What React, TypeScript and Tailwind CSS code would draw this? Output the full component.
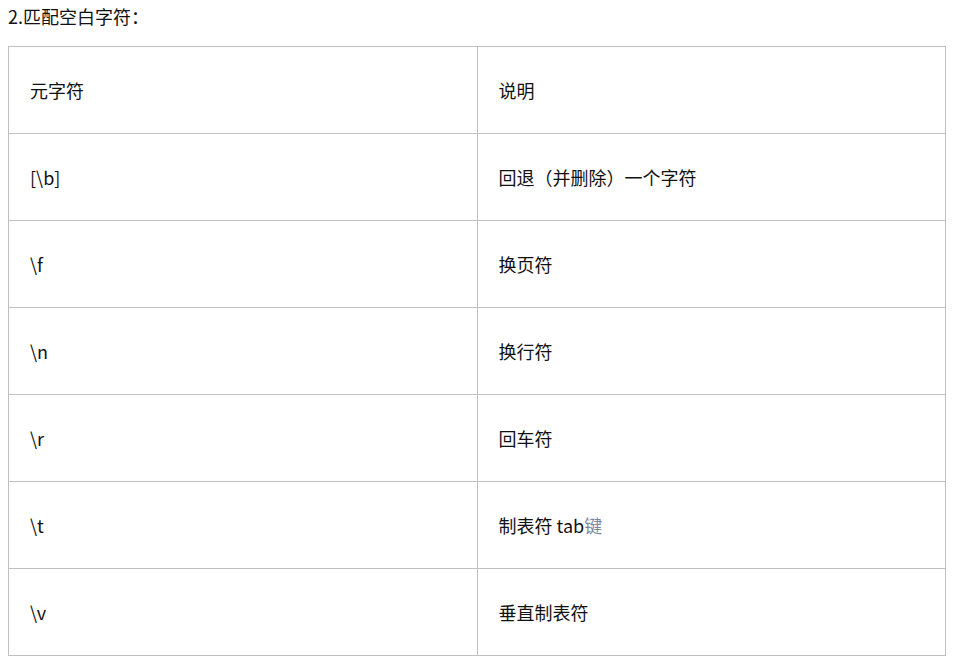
const rows: [string, React.ReactNode][] = [
  ['[\\b]', '回退（并删除）一个字符'],
  ['\\f', '换页符'],
  ['\\n', '换行符'],
  ['\\r', '回车符'],
  [
    '\\t',
    <>
      制表符 tab<span className="text-[#7a86a3]">键</span>
    </>,
  ],
  ['\\v', '垂直制表符'],
];

export default function App() {
  return (
    <div
      className="bg-white text-[18px] text-[#111] px-2 pt-[4px] min-h-[670px]"
      style={{ fontFamily: '"Microsoft YaHei", "Noto Sans CJK SC", "Noto Sans", sans-serif' }}
    >
      <p className="leading-[24px] mb-[18px]">2.匹配空白字符：</p>
      <table className="w-[938px] border-collapse table-fixed">
        <tbody>
          <tr>
            <td className="border border-[#c0c0c0] h-[87px] pl-[21px] align-middle">元字符</td>
            <td className="border border-[#c0c0c0] h-[87px] pl-[21px] align-middle">说明</td>
          </tr>
          {rows.map(([k, v], i) => (
            <tr key={i}>
              <td className="border border-[#c0c0c0] h-[87px] pl-[21px] align-middle">{k}</td>
              <td className="border border-[#c0c0c0] h-[87px] pl-[21px] align-middle">{v}</td>
            </tr>
          ))}
        </tbody>
      </table>
    </div>
  );
}
